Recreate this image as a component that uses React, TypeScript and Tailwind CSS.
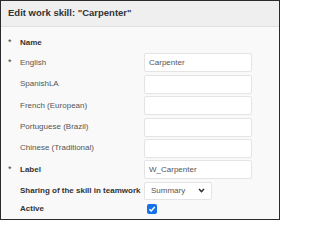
const font = "font-['Liberation_Sans',Arial,sans-serif]";

type Row = {
  label: string;
  required?: boolean;
  strong?: boolean;
  value?: string;
};

const textRows: Row[] = [
  { label: "English", required: true, value: "Carpenter" },
  { label: "SpanishLA" },
  { label: "French (European)" },
  { label: "Portuguese (Brazil)" },
  { label: "Chinese (Traditional)" },
  { label: "Label", required: true, strong: true, value: "W_Carpenter" },
];

function Star({ on }: { on?: boolean }) {
  return (
    <span className="w-[12px] shrink-0 text-[9px] leading-none text-[#444]">
      {on ? "*" : ""}
    </span>
  );
}

export default function App() {
  return (
    <div className={`h-[220px] w-[280px] overflow-hidden border border-[#2b2b2b] bg-[#f9f9f9] ${font}`}>
      <div className="flex h-[26px] items-center border-b border-[#dde1e6] bg-[#efefef] pl-[7px]">
        <h1 className="text-[9.5px] font-bold text-[#333]">Edit work skill: "Carpenter"</h1>
      </div>

      <div className="flex flex-col gap-[2.4px] pl-[7px] pt-[7px]">
        <div className="flex h-[17px] items-center">
          <Star on />
          <span className="text-[8px] font-bold text-[#333]">Name</span>
        </div>

        {textRows.map((row) => (
          <div key={row.label} className="flex h-[19px] items-center">
            <Star on={row.required} />
            <span
              className={`w-[124px] text-[8px] ${
                row.strong ? "font-bold text-[#333]" : "text-[#555]"
              }`}
            >
              {row.label}
            </span>
            <div className="flex h-[19px] w-[108px] items-center rounded-[2px] border border-[#e4e4e4] bg-white pl-[4px] text-[8px] text-[#555]">
              {row.value}
            </div>
          </div>
        ))}

        <div className="flex h-[18px] items-center">
          <Star />
          <span className="w-[124px] whitespace-nowrap text-[8px] font-bold text-[#333]">
            Sharing of the skill in teamwork
          </span>
          <div className="flex h-[18px] w-[68px] items-center justify-between rounded-[2px] border border-[#e4e4e4] bg-white pl-[6px] pr-[6px] text-[8px] text-[#555]">
            <span>Summary</span>
            <svg width="7" height="5" viewBox="0 0 7 5">
              <path d="M1 1l2.5 2.5L6 1" fill="none" stroke="#333" strokeWidth="1.6" />
            </svg>
          </div>
        </div>

        <div className="flex h-[13px] items-center">
          <Star />
          <span className="w-[127px] text-[8px] font-bold text-[#333]">Active</span>
          <span className="flex h-[10px] w-[10px] items-center justify-center rounded-[2px] bg-[#1672e8]">
            <svg width="8" height="8" viewBox="0 0 8 8">
              <path d="M1.4 4.2l1.8 1.8L6.7 2" fill="none" stroke="#fff" strokeWidth="1.5" />
            </svg>
          </span>
        </div>
      </div>
    </div>
  );
}
